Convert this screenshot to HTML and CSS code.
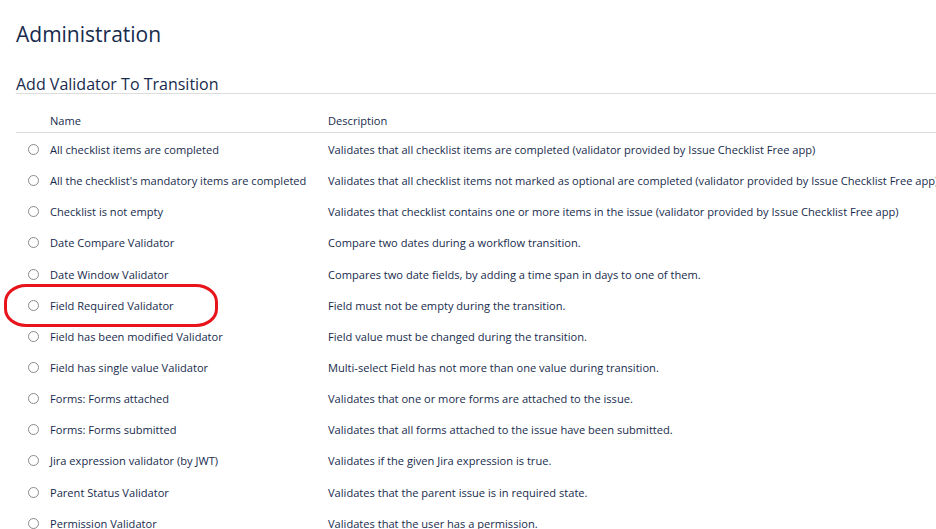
FILE: index.html
```html
<html>

<head>
  <title>Administration</title>
  <link rel="stylesheet" href="styles.css">
</head>

<body>
  <div class="page">
    <h1 class="title">Administration</h1>
    <h2 class="subtitle">Add Validator To Transition</h2>
    <table class="validators">
      <thead>
        <tr>
          <th class="col-radio"></th>
          <th class="col-name">Name</th>
          <th>Description</th>
        </tr>
      </thead>
      <tbody>
        <tr>
          <td class="col-radio"><span class="radio"></span></td>
          <td>All checklist items are completed</td>
          <td>Validates that all checklist items are completed (validator provided by Issue Checklist Free app)</td>
        </tr>
        <tr>
          <td class="col-radio"><span class="radio"></span></td>
          <td>All the checklist's mandatory items are completed</td>
          <td>Validates that all checklist items not marked as optional are completed (validator provided by Issue Checklist Free app)</td>
        </tr>
        <tr>
          <td class="col-radio"><span class="radio"></span></td>
          <td>Checklist is not empty</td>
          <td>Validates that checklist contains one or more items in the issue (validator provided by Issue Checklist Free app)</td>
        </tr>
        <tr>
          <td class="col-radio"><span class="radio"></span></td>
          <td>Date Compare Validator</td>
          <td>Compare two dates during a workflow transition.</td>
        </tr>
        <tr>
          <td class="col-radio"><span class="radio"></span></td>
          <td>Date Window Validator</td>
          <td>Compares two date fields, by adding a time span in days to one of them.</td>
        </tr>
        <tr>
          <td class="col-radio"><span class="radio"></span></td>
          <td>Field Required Validator</td>
          <td>Field must not be empty during the transition.</td>
        </tr>
        <tr>
          <td class="col-radio"><span class="radio"></span></td>
          <td>Field has been modified Validator</td>
          <td>Field value must be changed during the transition.</td>
        </tr>
        <tr>
          <td class="col-radio"><span class="radio"></span></td>
          <td>Field has single value Validator</td>
          <td>Multi-select Field has not more than one value during transition.</td>
        </tr>
        <tr>
          <td class="col-radio"><span class="radio"></span></td>
          <td>Forms: Forms attached</td>
          <td>Validates that one or more forms are attached to the issue.</td>
        </tr>
        <tr>
          <td class="col-radio"><span class="radio"></span></td>
          <td>Forms: Forms submitted</td>
          <td>Validates that all forms attached to the issue have been submitted.</td>
        </tr>
        <tr>
          <td class="col-radio"><span class="radio"></span></td>
          <td>Jira expression validator (by JWT)</td>
          <td>Validates if the given Jira expression is true.</td>
        </tr>
        <tr>
          <td class="col-radio"><span class="radio"></span></td>
          <td>Parent Status Validator</td>
          <td>Validates that the parent issue is in required state.</td>
        </tr>
        <tr>
          <td class="col-radio"><span class="radio"></span></td>
          <td>Permission Validator</td>
          <td>Validates that the user has a permission.</td>
        </tr>
      </tbody>
    </table>
    <div class="highlight"></div>
  </div>
</body>

</html>
```

FILE: styles.css
```css
body {
  margin: 0;
  font-family: 'Open Sans', sans-serif;
  color: #172b4d;
  overflow: hidden;
}

.page {
  position: relative;
  padding: 20px 0 0 16px;
}

.title {
  font-size: 21px;
  font-weight: 500;
  line-height: 28px;
  margin: 0;
}

.subtitle {
  font-size: 16px;
  font-weight: 500;
  line-height: 18px;
  margin: 27px 0 0;
  padding-bottom: 0;
  border-bottom: 1px solid #dcdcdc;
}

.validators {
  border-collapse: collapse;
  width: 1000px;
  margin-top: 16px;
  font-size: 11.1px;
  white-space: nowrap;
}

.validators th {
  text-align: left;
  font-weight: 400;
  height: 22px;
  padding: 0;
  border-bottom: 1px solid #dcdcdc;
  vertical-align: middle;
}

.validators td {
  height: 31.15px;
  padding: 4px 0 0;
  vertical-align: middle;
}

.col-radio {
  width: 34px;
}

.col-name {
  width: 278px;
}

.radio {
  display: block;
  width: 9px;
  height: 9px;
  margin-left: 12px;
  border: 1px solid #8a8a8a;
  border-radius: 50%;
}

.highlight {
  position: absolute;
  left: 4px;
  top: 284px;
  width: 208px;
  height: 37px;
  border: 3px solid #e8141c;
  border-radius: 22px / 18px;
}
```
